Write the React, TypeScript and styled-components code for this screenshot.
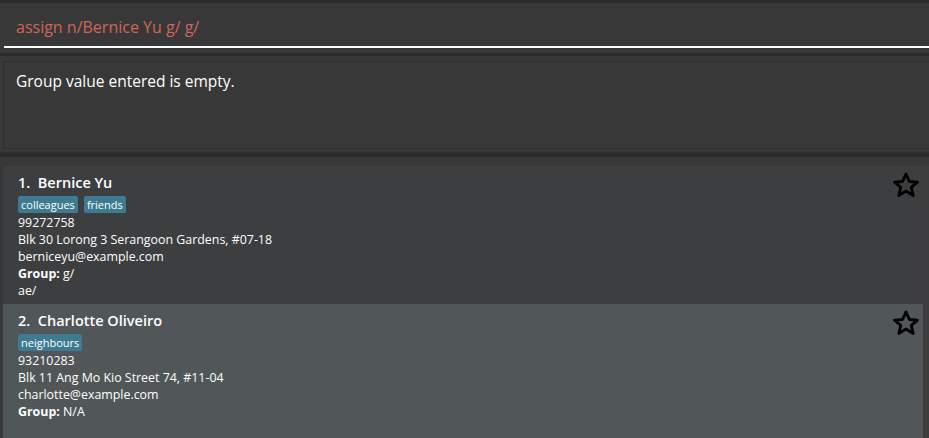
import React from "react";
import styled, { createGlobalStyle } from "styled-components";

const Global = createGlobalStyle`
  html, body { margin: 0; padding: 0; background: #2c2c2c; }
  body { font-family: "Open Sans", "Noto Sans", sans-serif; overflow: hidden; }
  * { box-sizing: border-box; }
`;

const Page = styled.div`
  width: 929px;
  height: 438px;
  display: flex;
  flex-direction: column;
  background: #2c2c2c;
  padding-top: 3px;
`;

const CommandPanel = styled.div`
  height: 50px;
  background: #383838;
  padding: 0 0 0 4px;
  display: flex;
  flex-direction: column;
`;

const CommandInput = styled.div`
  height: 45px;
  border-bottom: 2px solid #ffffff;
  display: flex;
  align-items: center;
  padding-left: 12px;
  padding-top: 5px;
  color: #d0645a;
  font-size: 16px;
`;

const ResultPanel = styled.div`
  margin-top: 3px;
  height: 96px;
  background: #383838;
  padding: 5px 0 3px 3px;
  display: flex;
`;

const ResultText = styled.div`
  flex: 1;
  border: 1px solid #2e2e2e;
  border-right: none;
  padding: 8px 12px;
  color: #ffffff;
  font-size: 15.5px;
`;

const ListPanel = styled.div`
  margin-top: 5px;
  flex: 1;
  background: #383838;
  padding: 9px 0 0 3px;
  display: flex;
  min-height: 0;
`;

const List = styled.div`
  flex: 1;
  display: flex;
  flex-direction: column;
`;

const ScrollTrack = styled.div`
  width: 6px;
  background: #3d3d3d;
`;

const Card = styled.div<{ $alt?: boolean }>`
  position: relative;
  background: ${(p) => (p.$alt ? "#515658" : "#3c3e40")};
  padding: 6px 0 5px 15px;
  color: #ffffff;
  display: flex;
  flex-direction: column;
  &:last-child {
    flex: 1;
  }
`;

const Name = styled.div`
  font-size: 14.5px;
  font-weight: 600;
  line-height: 22px;
  white-space: pre;
`;

const Tags = styled.div`
  display: flex;
  gap: 6px;
  margin: 2px 0 1px;
`;

const Tag = styled.span`
  background: #3e7b91;
  color: #ffffff;
  font-size: 11px;
  line-height: 17px;
  padding: 0 3px;
  border-radius: 2px;
`;

const Line = styled.div`
  font-size: 12.4px;
  line-height: 17px;
`;

const Bold = styled.b`
  font-weight: 700;
`;

const Star = styled.svg`
  position: absolute;
  top: 5px;
  right: 3px;
  width: 28px;
  height: 28px;
`;

function StarIcon() {
  return (
    <Star viewBox="0 0 24 24" fill="none" stroke="#000" strokeWidth={2.4} strokeLinejoin="round">
      <polygon points="12,2.5 14.9,9 21.8,9.5 16.5,14 18.2,21 12,17.2 5.8,21 7.5,14 2.2,9.5 9.1,9" />
    </Star>
  );
}

const persons = [
  {
    name: "Bernice Yu",
    tags: ["colleagues", "friends"],
    phone: "99272758",
    address: "Blk 30 Lorong 3 Serangoon Gardens, #07-18",
    email: "berniceyu@example.com",
    group: "g/",
    extra: "ae/",
  },
  {
    name: "Charlotte Oliveiro",
    tags: ["neighbours"],
    phone: "93210283",
    address: "Blk 11 Ang Mo Kio Street 74, #11-04",
    email: "charlotte@example.com",
    group: "N/A",
    extra: "",
  },
];

export default function App() {
  return (
    <>
      <Global />
      <Page>
        <CommandPanel>
          <CommandInput>assign n/Bernice Yu g/ g/</CommandInput>
        </CommandPanel>
        <ResultPanel>
          <ResultText>Group value entered is empty.</ResultText>
        </ResultPanel>
        <ListPanel>
          <List>
            {persons.map((p, i) => (
              <Card key={p.name} $alt={i % 2 === 1}>
                <Name>{`${i + 1}.  ${p.name}`}</Name>
                <Tags>
                  {p.tags.map((t) => (
                    <Tag key={t}>{t}</Tag>
                  ))}
                </Tags>
                <Line>{p.phone}</Line>
                <Line>{p.address}</Line>
                <Line>{p.email}</Line>
                <Line>
                  <Bold>Group:</Bold> {p.group}
                </Line>
                {p.extra && <Line>{p.extra}</Line>}
                <StarIcon />
              </Card>
            ))}
          </List>
          <ScrollTrack />
        </ListPanel>
      </Page>
    </>
  );
}
